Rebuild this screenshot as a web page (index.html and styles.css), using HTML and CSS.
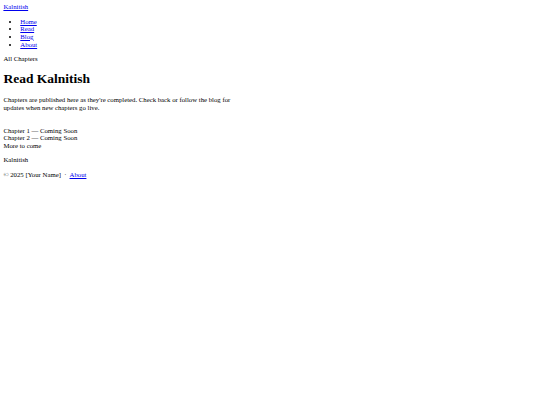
FILE: index.html
```html
<!DOCTYPE html>
<html>

<head>
  <title>Read Kalnitish</title>
  <meta charset="utf-8">
  <link rel="stylesheet" href="styles.css">
</head>

<body>

<header class="site-header">
  <a href="#" class="brand">Kalnitish</a>
  <ul class="nav">
    <li><a href="#">Home</a></li>
    <li><a href="#">Read</a></li>
    <li><a href="#">Blog</a></li>
    <li><a href="#">About</a></li>
  </ul>
  <div class="crumb">All Chapters</div>
</header>

<main>
  <h1>Read Kalnitish</h1>
  <p class="intro">Chapters are published here as they're completed. Check back or follow the blog for updates when new chapters go live.</p>

  <div class="chapters">
    <div class="chapter">Chapter 1 — Coming Soon</div>
    <div class="chapter">Chapter 2 — Coming Soon</div>
    <div class="chapter">More to come</div>
  </div>
</main>

<footer class="site-footer">
  <p>Kalnitish</p>
  <p>© 2025 [Your Name] <span class="sep">·</span> <a href="#">About</a></p>
</footer>

</body>

</html>
```

FILE: styles.css
```css
body {
  margin: 3.4px;
  font-family: "Liberation Serif", "Times New Roman", serif;
  font-size: 6.75px;
  line-height: 7.6px;
  color: #000;
}

a {
  color: #0000ee;
}

p {
  margin: 1em 0;
}

.nav {
  margin: 1em 0;
  padding-left: 2.5em;
}

h1 {
  font-size: 2em;
  line-height: 15.5px;
  margin: 0.67em 0;
}

.intro {
  max-width: 35em;
}

.chapters {
  margin-top: 2.3em;
}

.sep {
  margin: 0 0.25em;
}
```
